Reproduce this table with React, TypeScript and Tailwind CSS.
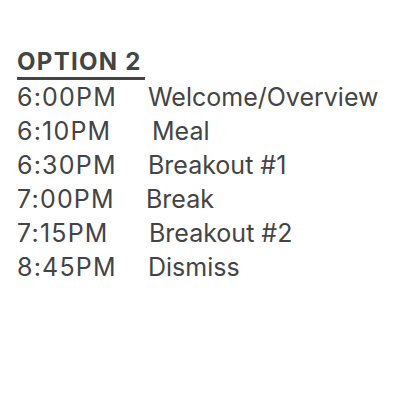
export default function App() {
  const rows: [string, string, string][] = [
    ["6:00PM", "Welcome/Overview", "ml-[31px]"],
    ["6:10PM", "Meal", "ml-[35px]"],
    ["6:30PM", "Breakout #1", "ml-[31px]"],
    ["7:00PM", "Break", "ml-[29px]"],
    ["7:15PM", "Breakout #2", "ml-[32px]"],
    ["8:45PM", "Dismiss", "ml-[31px]"],
  ];
  return (
    <div className="w-[400px] h-[400px] bg-white text-[#444] pl-[17px] pt-[48px]" style={{ fontFamily: "Inter, 'Noto Sans', sans-serif" }}>
      <div className="inline-block border-b-[3px] border-[#444] text-[24px] leading-[28px] font-bold tracking-[1.3px] pr-[3px] pb-[1px]">OPTION 2</div>
      <div className="flex flex-col">
        {rows.map(([t, d, m]) => (
          <div key={t} className="flex text-[25px] leading-[34px]">
            <span className="w-[100px] tracking-[1.2px]">{t}</span>
            <span className={m}>{d}</span>
          </div>
        ))}
      </div>
    </div>
  );
}
